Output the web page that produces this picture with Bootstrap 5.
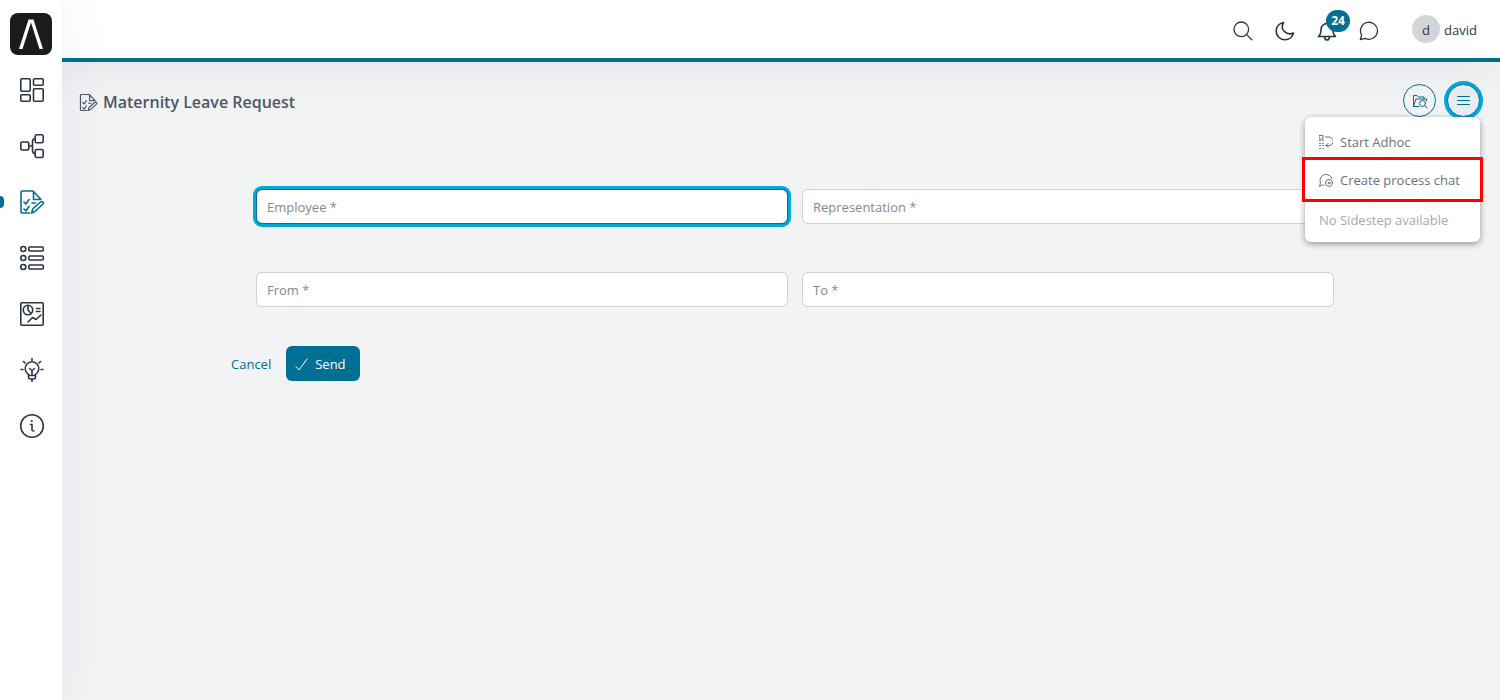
<!DOCTYPE html>
<html lang="en">
<head>
<meta charset="utf-8">
<meta name="viewport" content="width=device-width, initial-scale=1">
<title>Maternity Leave Request</title>
<link href="https://cdn.jsdelivr.net/npm/bootstrap@5.3.0/dist/css/bootstrap.min.css" rel="stylesheet">
<style>
:root { --brand: #006f94; --ring: #00a8dc; --ink: #2b3444; --muted: #4f5766; }
body { font-family: "Open Sans", "Noto Sans", sans-serif; font-size: 13px; line-height: 20px; color: var(--ink); background: #f2f3f5; }
svg { fill: none; stroke: currentColor; stroke-width: 1.6; stroke-linecap: round; stroke-linejoin: round; display: block; flex: none; }
.thin { stroke-width: 1; }
.sidebar { width: 62px; background: #fff; box-shadow: 0 0 50px rgba(60, 90, 110, .08); z-index: 2; padding-top: 13px; }
.side-link { height: 56px; width: 62px; padding-left: 2px; color: var(--ink); position: relative; }
.side-link.active { color: var(--brand); }
.side-link.active::before { content: ""; position: absolute; left: 0; top: 22px; width: 4px; height: 12px; border-radius: 0 4px 4px 0; background: var(--brand); }
.logo { margin-bottom: 7px; }
.topbar { height: 62px; background: #fff; border-bottom: 4px solid var(--brand); padding-right: 23px; box-shadow: 0 0 50px rgba(60, 90, 110, .1); z-index: 1; }
.icon-btn { width: 42px; height: 42px; padding: 0; border: 0; color: var(--ink); margin-top: 4px; }
.count { position: absolute; left: 20px; top: 0; width: 24px; height: 22px; border-radius: 12px; background: var(--brand); color: #fff; font-size: 12px; line-height: 22px; font-weight: 700; }
.avatar { width: 28px; height: 28px; background: #d3d5d9; }
.user { margin-left: 22px; color: var(--ink); }
.user-name { padding-top: 2px; }
.page-head { padding: 22px 20px 0 17px; }
.page-head h1 { font-size: 16px; line-height: 24px; font-weight: 600; color: var(--muted); }
.title { color: var(--muted); height: 36px; gap: 5px; }
.round-btn { width: 33px; height: 33px; padding: 0; border: 1px solid var(--brand); border-radius: 50%; color: var(--brand); }
.round-btn.focused { box-shadow: 0 0 0 3px var(--ring); background: #e9edf1; color: var(--brand); }
.head-tools { gap: 11px; height: 33px; }
.menu { position: absolute; right: 0; top: 33px; width: 175px; padding: 5px 0 3px; background: #fff; border-radius: 6px; box-shadow: 0 2px 6px rgba(0, 0, 0, .4); z-index: 3; }
.menu-item { height: 39px; width: 100%; padding: 0 14px; border: 0; background: none; color: #6b7280; position: relative; gap: 7px; }
.menu-item:disabled { color: #a5a8ae; }
.marked { border-bottom: 1px solid #d5d8dc; }
.marked::after { content: ""; position: absolute; inset: -4px -3px -3px; border: 3px solid #f00; z-index: 1; }
.form-area { padding: 69px 166px 0 194px; }
.fields { display: grid; grid-template-columns: 1fr 1fr; gap: 48px 14px; }
.field { position: relative; }
.field label { position: absolute; left: 11px; top: 8px; color: #85888f; pointer-events: none; }
.field input { height: 35px; border: 1px solid #d1d2d9; border-radius: 6px; padding: 0 10px; font-size: 13px; }
.field.focused input { border-color: var(--brand); box-shadow: 0 0 0 3px var(--ring); }
.actions { margin: 39px 0 0 -25px; gap: 15px; }
.actions a { color: var(--brand); }
.send { height: 35px; width: 74px; padding: 2px 0 0 9px; border: 0; border-radius: 6px; background: var(--brand); color: #fff; font-size: 13px; gap: 7px; }
.send:hover { background: var(--brand); color: #fff; }
</style>
</head>
<body>
<div class="d-flex min-vh-100">
  <nav class="sidebar d-flex flex-column flex-shrink-0" aria-label="Main">
    <a href="#" class="logo mx-auto" aria-label="Home">
      <svg width="42" height="42" viewBox="0 0 42 42"><rect width="42" height="42" rx="8" fill="#1b1b1b" stroke="none"/><path d="M9 36 18.500 6.500h5L33 36h-3.500L21 9.500 12.500 36z" fill="#fff" stroke="none"/></svg>
    </a>
    <a href="#" class="side-link d-flex align-items-center justify-content-center" aria-label="Dashboard">
      <svg width="26" height="26" viewBox="0 0 26 26"><rect x="1.800" y="1.800" width="9.400" height="12.400" rx="1"/><rect x="14.500" y="1.800" width="9.700" height="6.400" rx="1"/><rect x="1.800" y="17.800" width="9.400" height="6.400" rx="1"/><rect x="14.500" y="11.800" width="9.700" height="12.400" rx="1"/></svg>
    </a>
    <a href="#" class="side-link d-flex align-items-center justify-content-center" aria-label="Processes">
      <svg width="26" height="26" viewBox="0 0 26 26"><rect x="1.800" y="9" width="8" height="8" rx="1.500"/><rect x="16.200" y="1.800" width="8" height="8" rx="1.500"/><rect x="16.200" y="16.500" width="8" height="8" rx="1.500"/><path d="M10 13h3.500M16 5.500q-2.500.3-2.500 3v9q0 3 2.500 3"/></svg>
    </a>
    <a href="#" class="side-link active d-flex align-items-center justify-content-center" aria-label="Tasks">
      <svg width="26" height="26" viewBox="0 0 26 26"><path d="M22 10.500 14 2H3q-1 0-1 1v20q0 1 1 1h7.500M14.500 2.500v8H22M5 13l2 2 3-4.500M5 20l2 2 3-4.500M13 14h3.500M12.500 24l1.500-4.500 7.500-6.500q1.500-1 2.500 0 1 1-.5 2.500L16 22.500z"/></svg>
    </a>
    <a href="#" class="side-link d-flex align-items-center justify-content-center" aria-label="Cases">
      <svg width="26" height="26" viewBox="0 0 26 26"><circle cx="4.300" cy="4" r="2.500"/><circle cx="4.300" cy="13" r="2.500"/><circle cx="4.300" cy="22" r="2.500"/><rect x="9.800" y="2" width="14.500" height="4" rx="1"/><rect x="9.800" y="11" width="14.500" height="4" rx="1"/><rect x="9.800" y="20" width="14.500" height="4" rx="1"/></svg>
    </a>
    <a href="#" class="side-link d-flex align-items-center justify-content-center" aria-label="Statistics">
      <svg width="26" height="26" viewBox="0 0 26 26"><rect x="1.800" y="1.800" width="22.400" height="22.400" rx="1"/><circle cx="9" cy="9" r="4.700"/><path d="M9 4.500V9l3 3.500M17.500 7.500H21M17.500 10.500H21M9 21l4.500-4.500 3.500 2 5-4.500"/></svg>
    </a>
    <a href="#" class="side-link d-flex align-items-center justify-content-center" aria-label="Ideas">
      <svg width="26" height="26" viewBox="0 0 26 26"><path d="M10 18.500q0-1-1-1.500a6.800 6.800 0 1 1 8 0q-1 .5-1 1.500zM9.500 18.500V20q0 2 2 2h3q2 0 2-2v-1.500M13 22.500v2M13 18v-4.500M10.500 11.500l2.500 2 2.500-2M13 1.500v1.700M4.500 4.500 6 6M21.500 4.500 20 6M2 12.500h2M22 12.500h2"/></svg>
    </a>
    <a href="#" class="side-link d-flex align-items-center justify-content-center" aria-label="Information">
      <svg width="26" height="26" viewBox="0 0 26 26"><circle cx="13" cy="13" r="11.300"/><path d="M11.500 11.500H13V17q0 1 2 1"/><circle cx="12.800" cy="8" r="1.100" fill="currentColor" stroke="none"/></svg>
    </a>
  </nav>

  <div class="flex-grow-1 d-flex flex-column">
    <header class="topbar d-flex align-items-center justify-content-end position-relative">
      <button class="btn icon-btn d-flex align-items-center justify-content-center" aria-label="Search"><svg width="20" height="20" viewBox="0 0 20 20"><g stroke-width="1.300"><circle cx="8.300" cy="8.300" r="7.300"/><path d="m13.600 13.600 5.200 5.200"/></g></svg></button>
      <button class="btn icon-btn d-flex align-items-center justify-content-center" aria-label="Dark mode"><svg width="20" height="20" viewBox="0 0 20 20"><path d="M8.500 1.500C4 2.500 1.200 6 1.200 10a8.700 8.700 0 0 0 8.800 8.800c4 0 7.500-2.800 8.500-6.800C12 15 4.500 9 8.500 1.500z"/></svg></button>
      <button class="btn icon-btn d-flex align-items-center justify-content-center position-relative" aria-label="Notifications"><svg width="20" height="20" viewBox="0 0 20 20"><path d="M1.500 15.500h17c-2-1.500-2.500-3.500-2.500-7a6 6 0 0 0-12 0c0 3.500-.5 5.500-2.500 7zM7.500 16q.5 3 2.500 3t2.500-3M10 1v1.500"/></svg><span class="count">24</span></button>
      <button class="btn icon-btn d-flex align-items-center justify-content-center" aria-label="Chat"><svg width="20" height="20" viewBox="0 0 20 20"><path d="M1.300 18.700 2.600 14a8.500 8.500 0 1 1 3.600 3.400z" stroke-width="1.300"/></svg></button>
      <a href="#" class="user d-flex align-items-center gap-1 text-decoration-none"><span class="avatar user-name rounded-circle d-flex align-items-center justify-content-center">d</span><span class="user-name">david</span></a>
    </header>

    <main class="flex-grow-1">
      <div class="page-head d-flex justify-content-between">
        <div class="title d-flex align-items-center">
          <svg width="19" height="19" viewBox="0 0 26 26"><path d="M22 10.500 14 2H3q-1 0-1 1v20q0 1 1 1h7.500M14.500 2.500v8H22M5 13l2 2 3-4.500M5 20l2 2 3-4.500M13 14h3.500M12.500 24l1.500-4.500 7.500-6.500q1.500-1 2.500 0 1 1-.5 2.500L16 22.500z"/></svg>
          <h1 class="mb-0">Maternity Leave Request</h1>
        </div>
        <div class="head-tools d-flex position-relative">
          <button class="btn round-btn d-flex align-items-center justify-content-center" aria-label="Open case"><svg width="16" height="16" viewBox="0 0 16 16"><g class="thin"><path d="M7 13.500H1.500V2.500h3.500L6.500 4H12v2M1.500 13.500 4 6h10.500v2"/><circle cx="10.500" cy="10.500" r="3"/><path d="m12.800 12.800 2.200 2.200"/></g></svg></button>
          <button class="btn round-btn focused d-flex align-items-center justify-content-center" aria-label="Actions" aria-expanded="true"><svg width="13" height="13" viewBox="0 0 13 13"><path class="thin" d="M.5 2.500h12M.5 6.500h12M.5 10.500h12"/></svg></button>
          <div class="menu">
            <button class="menu-item d-flex align-items-center"><svg width="14" height="14" viewBox="0 0 14 14"><g class="thin"><path d="M.5.500h3.500v3.500H.500z"/><path d="M.5 5.500h4M.5 8.500h4M.5 10.500h4M.5 13.500h4" stroke-dasharray="1 2"/><path d="M6.500 2h3.500a3.500 3.500 0 0 1 0 8.500H7M9.300 8.200 7 10.500l2.300 2.300"/></g></svg><span>Start Adhoc</span></button>
            <button class="menu-item marked d-flex align-items-center"><svg width="14" height="14" viewBox="0 0 14 14"><g class="thin"><path d="M5 12.500q-1-.3-1.500-.7L.5 13.500 1.500 10A6.200 6.200 0 1 1 13.200 6"/><circle cx="10" cy="10" r="3.500"/><circle cx="10" cy="10" r="1"/></g></svg><span>Create process chat</span></button>
            <button class="menu-item text-start" disabled>No Sidestep available</button>
          </div>
        </div>
      </div>

      <form class="form-area">
        <div class="fields">
          <div class="field focused"><input class="form-control" type="text" id="employee"><label for="employee">Employee *</label></div>
          <div class="field"><input class="form-control" type="text" id="representation"><label for="representation">Representation *</label></div>
          <div class="field"><input class="form-control" type="text" id="from"><label for="from">From *</label></div>
          <div class="field"><input class="form-control" type="text" id="to"><label for="to">To *</label></div>
        </div>
        <div class="actions d-flex align-items-center">
          <a href="#" class="text-decoration-none">Cancel</a>
          <button type="button" class="btn send d-flex align-items-center"><svg width="13" height="13" viewBox="0 0 13 13"><path class="thin" d="M1 8.500 4 12l8-11"/></svg>Send</button>
        </div>
      </form>
    </main>
  </div>
</div>
<script src="https://cdn.jsdelivr.net/npm/bootstrap@5.3.0/dist/js/bootstrap.bundle.min.js"></script>
</body>
</html>
